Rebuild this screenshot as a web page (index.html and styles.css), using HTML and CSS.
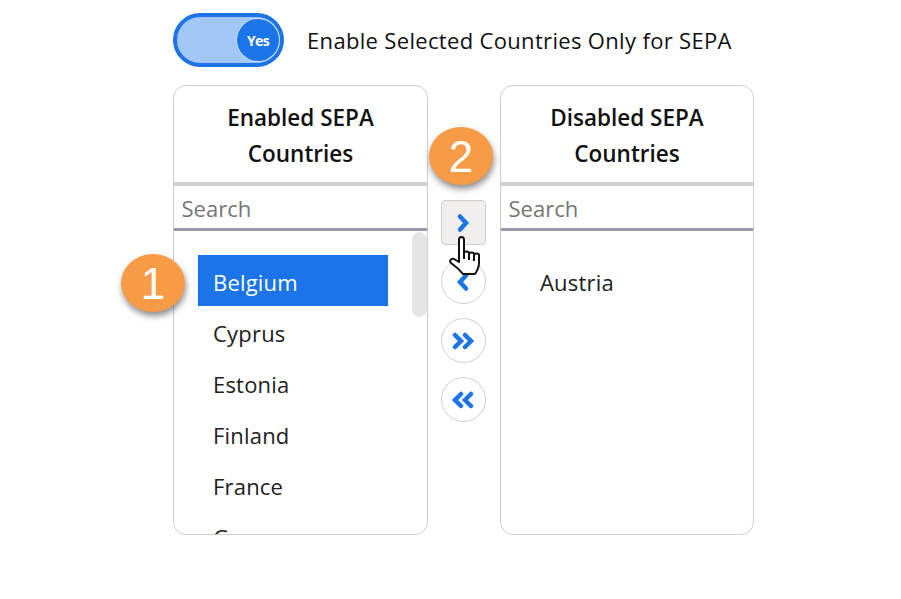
FILE: index.html
```html
<!DOCTYPE html>
<html lang="en">
<head>
  <meta charset="UTF-8">
  <title>SEPA Countries</title>
  <link rel="stylesheet" href="styles.css">
</head>
<body>
  <div class="page">
    <div class="toggle-row">
      <div class="toggle">
        <span class="knob">Yes</span>
      </div>
      <span class="toggle-label">Enable Selected Countries Only for SEPA</span>
    </div>
    <div class="transfer">
      <div class="panel">
        <div class="panel-title">Enabled SEPA Countries</div>
        <div class="search">Search</div>
        <div class="list">
          <div class="item selected">Belgium</div>
          <div class="item">Cyprus</div>
          <div class="item">Estonia</div>
          <div class="item">Finland</div>
          <div class="item">France</div>
          <div class="item">Germany</div>
          <div class="scroll-thumb"></div>
        </div>
      </div>
      <div class="arrows">
        <button class="arrow hover">
          <svg width="16" height="20" viewBox="0 0 16 20"><path d="M5 3.5l6 6.5-6 6.5"/></svg>
        </button>
        <button class="arrow">
          <svg width="16" height="20" viewBox="0 0 16 20"><path d="M11 3.5L5 10l6 6.5"/></svg>
        </button>
        <button class="arrow">
          <svg width="24" height="18" viewBox="0 0 24 18"><path d="M4 3l6 6-6 6M14 3l6 6-6 6"/></svg>
        </button>
        <button class="arrow">
          <svg width="24" height="18" viewBox="0 0 24 18"><path d="M10 3L4 9l6 6M20 3l-6 6 6 6"/></svg>
        </button>
      </div>
      <div class="panel">
        <div class="panel-title">Disabled SEPA Countries</div>
        <div class="search">Search</div>
        <div class="list">
          <div class="item">Austria</div>
        </div>
      </div>
      <div class="badge badge-one">1</div>
      <div class="badge badge-two">2</div>
      <svg class="hand" width="32" height="40" viewBox="0 0 32 40">
        <path d="M10 4c0-4 5-4 5 0v13c0-2 5-2 5 0v1c0-2 5-2 5 0v1c0-2 5-2 5 0v8c0 5-2 8-4 11H14c-2-2-4-5-7-7l-5-4c-2-2 0-5 3-4l5 3z"/>
        <path d="M15 17v6M20 18v6M25 19v6"/>
      </svg>
    </div>
  </div>
</body>
</html>
```

FILE: styles.css
```css
body {
  background: #fff;
  font-family: 'Open Sans', 'Noto Sans', Arial, sans-serif;
  color: #212121;
  margin: 0;
  padding: 0;
}
.page {
  width: 581px;
  margin-left: 173px;
  padding-top: 13px;
}
.toggle-row {
  display: flex;
  align-items: center;
  gap: 23px;
  height: 54px;
}
.toggle {
  width: 111px;
  height: 54px;
  box-sizing: border-box;
  border: 4px solid #1b74e8;
  border-radius: 27px;
  background: #a3c7f7;
  display: flex;
  align-items: center;
  justify-content: flex-end;
  padding-right: 1px;
}
.knob {
  width: 42px;
  height: 42px;
  border-radius: 50%;
  background: #1b74e8;
  color: #fff;
  font-size: 14px;
  font-weight: 700;
  letter-spacing: -0.7px;
  display: flex;
  align-items: center;
  justify-content: center;
  box-shadow: 0 0 0 1px #c4dbfa;
}
.toggle-label {
  font-size: 22px;
  color: #111;
  letter-spacing: 0.33px;
  padding-bottom: 1px;
}
.transfer {
  position: relative;
  display: flex;
  margin-top: 18px;
}
.panel {
  width: 255px;
  height: 450px;
  box-sizing: border-box;
  border: 1px solid #cfcfcf;
  border-radius: 13px;
  overflow: hidden;
  flex-shrink: 0;
}
.panel + .arrows + .panel {
  width: 254px;
}
.panel-title {
  height: 100px;
  box-sizing: border-box;
  padding: 14px 40px 0;
  text-align: center;
  font-size: 22.5px;
  font-weight: 600;
  line-height: 36px;
  color: #111;
  border-bottom: 4px solid #cfcfcf;
}
.search {
  height: 45px;
  box-sizing: border-box;
  padding: 5px 8px 0 7.5px;
  font-size: 22px;
  line-height: 34px;
  color: #757575;
  border-bottom: 3px solid #9a9aa8;
}
.list {
  position: relative;
  padding: 24px 39px 0 24px;
}
.item {
  height: 51px;
  padding-left: 15px;
  font-size: 22px;
  line-height: 55px;
  letter-spacing: 0.2px;
  white-space: nowrap;
}
.item.selected {
  background: #1b74e8;
  color: #fff;
}
.scroll-thumb {
  position: absolute;
  top: 1px;
  right: 0;
  width: 15px;
  height: 85px;
  border-radius: 8px;
  background: #e5e5e5;
}
.arrows {
  width: 72px;
  flex-shrink: 0;
  display: flex;
  flex-direction: column;
  align-items: center;
  gap: 14px;
  padding: 115px 2px 0 0;
  box-sizing: border-box;
}
.arrow {
  width: 45px;
  height: 45px;
  padding: 0;
  background: #fff;
  border: 1px solid #cfcfcf;
  border-radius: 50%;
  display: flex;
  align-items: center;
  justify-content: center;
}
.arrow.hover {
  background: #f0efee;
  border-radius: 4px;
}
.arrow svg path {
  fill: none;
  stroke: #1b74e8;
  stroke-width: 4.5;
  stroke-linecap: round;
  stroke-linejoin: miter;
}
.badge {
  position: absolute;
  width: 64px;
  height: 58px;
  border-radius: 50%;
  background: #f89b46;
  color: #fff;
  font-family: 'Liberation Sans', Arial, sans-serif;
  font-size: 44px;
  line-height: 60px;
  text-align: center;
  box-shadow: 1px 4px 6px rgba(0, 0, 0, 0.45);
}
.badge-one {
  left: -52px;
  top: 169px;
}
.badge-two {
  left: 256px;
  top: 42px;
}
.hand {
  position: absolute;
  left: 276px;
  top: 151px;
}
.hand path {
  fill: #fff;
  stroke: #111;
  stroke-width: 2;
  stroke-linejoin: round;
}
```
